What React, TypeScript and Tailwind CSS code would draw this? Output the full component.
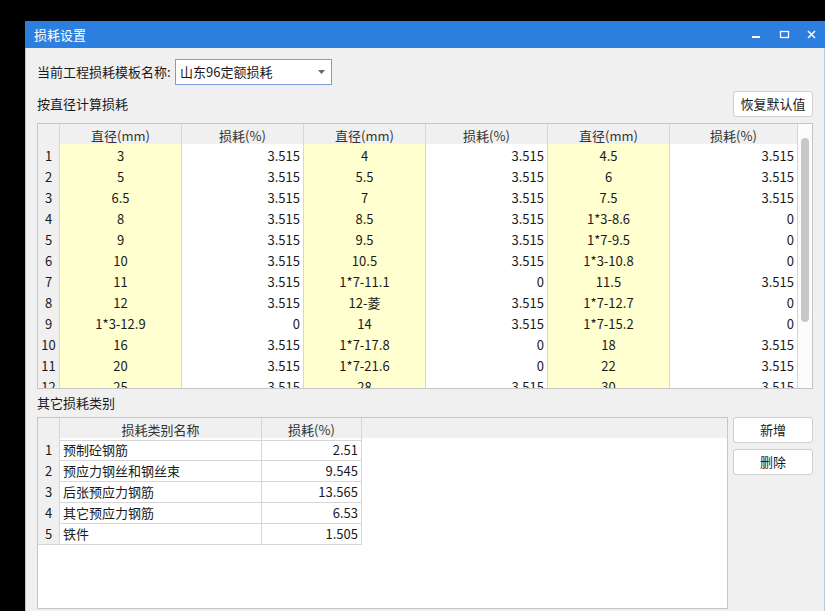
const font = { fontFamily: '"Noto Sans CJK SC", "Noto Sans", sans-serif' }

const rows: [string, string, string, string, string, string][] = [
  ['3', '3.515', '4', '3.515', '4.5', '3.515'],
  ['5', '3.515', '5.5', '3.515', '6', '3.515'],
  ['6.5', '3.515', '7', '3.515', '7.5', '3.515'],
  ['8', '3.515', '8.5', '3.515', '1*3-8.6', '0'],
  ['9', '3.515', '9.5', '3.515', '1*7-9.5', '0'],
  ['10', '3.515', '10.5', '3.515', '1*3-10.8', '0'],
  ['11', '3.515', '1*7-11.1', '0', '11.5', '3.515'],
  ['12', '3.515', '12-菱', '3.515', '1*7-12.7', '0'],
  ['1*3-12.9', '0', '14', '3.515', '1*7-15.2', '0'],
  ['16', '3.515', '1*7-17.8', '0', '18', '3.515'],
  ['20', '3.515', '1*7-21.6', '0', '22', '3.515'],
  ['25', '3.515', '28', '3.515', '30', '3.515'],
]

const others: [string, string][] = [
  ['预制砼钢筋', '2.51'],
  ['预应力钢丝和钢丝束', '9.545'],
  ['后张预应力钢筋', '13.565'],
  ['其它预应力钢筋', '6.53'],
  ['铁件', '1.505'],
]

const mainCols = 'grid grid-cols-[22px_122px_122px_122px_122px_122px_128px]'
const otherCols = 'grid grid-cols-[22px_202px_100px]'
const cell = 'border-r border-b border-[#d6d6d6] flex items-center pt-[2px]'

function Button({ label }: { label: string }) {
  return (
    <button
      type="button"
      className="w-[80px] h-[26px] bg-white border border-[#cfcfcf] rounded-[3px] text-[13px] text-[#1a1a1a] flex items-center justify-center"
    >
      {label}
    </button>
  )
}

export default function App() {
  return (
    <div className="w-[825px] h-[611px] bg-black overflow-hidden text-[12px] text-[#1a1a1a]" style={font}>
      <div className="ml-[25px] mt-[21px] w-[800px] h-[590px] flex flex-col">
        {/* Title bar */}
        <div className="h-[27px] bg-[#2d7fdf] flex items-center pl-[9px] shrink-0">
          <span className="text-white text-[13px] flex-1">损耗设置</span>
          <svg width="80" height="27" viewBox="0 0 80 27" className="mr-[-1px]">
            <rect x="6" y="15" width="8" height="2" fill="white" />
            <rect x="34.5" y="10.5" width="8" height="6" fill="none" stroke="white" strokeWidth="1.3" />
            <path d="M62 10 L69 17 M69 10 L62 17" stroke="white" strokeWidth="1.5" />
          </svg>
        </div>

        {/* Body */}
        <div className="flex-1 bg-[#f0f0f0] border-x border-[#b8c6dc] px-[11px] flex flex-col min-h-0">
          <div className="flex items-center mt-[11px] h-[26px]">
            <span className="w-[138px] text-[13px]">当前工程损耗模板名称:</span>
            <div className="w-[157px] h-[26px] bg-white border border-[#7b9ad6] flex items-center pl-[4px] pr-[6px]">
              <span className="flex-1 text-[13px]">山东96定额损耗</span>
              <svg width="7" height="4" viewBox="0 0 7 4">
                <path d="M0 0 L7 0 L3.5 4 Z" fill="#666" />
              </svg>
            </div>
          </div>

          <div className="flex items-center justify-between mt-[6px] h-[26px]">
            <span className="text-[13px]">按直径计算损耗</span>
            <Button label="恢复默认值" />
          </div>

          {/* Diameter table */}
          <div className="mt-[6px] h-[266px] border border-[#c6c6c6] bg-white flex overflow-hidden shrink-0">
            <div className="w-[760px] shrink-0">
              <div className={`${mainCols} h-[20px] bg-[#f0f0f0] text-[#333] text-[13px]`}>
                <div className={cell} />
                {['直径(mm)', '损耗(%)', '直径(mm)', '损耗(%)', '直径(mm)', '损耗(%)'].map((h, i) => (
                  <div key={i} className={`${cell} justify-center`}>
                    {h}
                  </div>
                ))}
              </div>
              {rows.map((r, i) => (
                <div key={i} className={`${mainCols} h-[21px]`}>
                  <div className={`${cell} justify-center bg-[#f0f0f0] text-[13px]`}>{i + 1}</div>
                  {r.map((v, j) =>
                    j % 2 === 0 ? (
                      <div key={j} className={`${cell} justify-center bg-[#ffffcf] text-[13px]`}>
                        {v}
                      </div>
                    ) : (
                      <div key={j} className={`${cell} justify-end pr-[3px] bg-white text-[13px]`}>
                        {v}
                      </div>
                    )
                  )}
                </div>
              ))}
            </div>
            <div className="flex-1 bg-[#fcfcfc] pt-[14px] flex justify-center">
              <div className="w-[8px] h-[184px] rounded-full bg-[#c8c8c8]" />
            </div>
          </div>

          <div className="h-[28px] flex items-center text-[13px]">其它损耗类别</div>

          <div className="flex gap-[5px]">
            <div className="w-[691px] h-[192px] border border-[#c6c6c6] bg-white">
              <div className={`${otherCols} h-[20px] bg-[#f0f0f0] text-[#333] text-[13px]`}>
                <div className={cell} />
                <div className={`${cell} justify-center`}>损耗类别名称</div>
                <div className={`${cell} justify-center`}>损耗(%)</div>
              </div>
              {others.map(([n, v], i) => (
                <div key={i} className={`${otherCols} h-[21px]`}>
                  <div className={`${cell} justify-center bg-[#f0f0f0] text-[13px]`}>{i + 1}</div>
                  <div className={`${cell} pl-[3px] text-[13px]`}>{n}</div>
                  <div className={`${cell} justify-end pr-[3px] text-[13px]`}>{v}</div>
                </div>
              ))}
            </div>
            <div className="flex flex-col gap-[6px] ml-auto">
              <Button label="新增" />
              <Button label="删除" />
            </div>
          </div>
        </div>
      </div>
    </div>
  )
}
